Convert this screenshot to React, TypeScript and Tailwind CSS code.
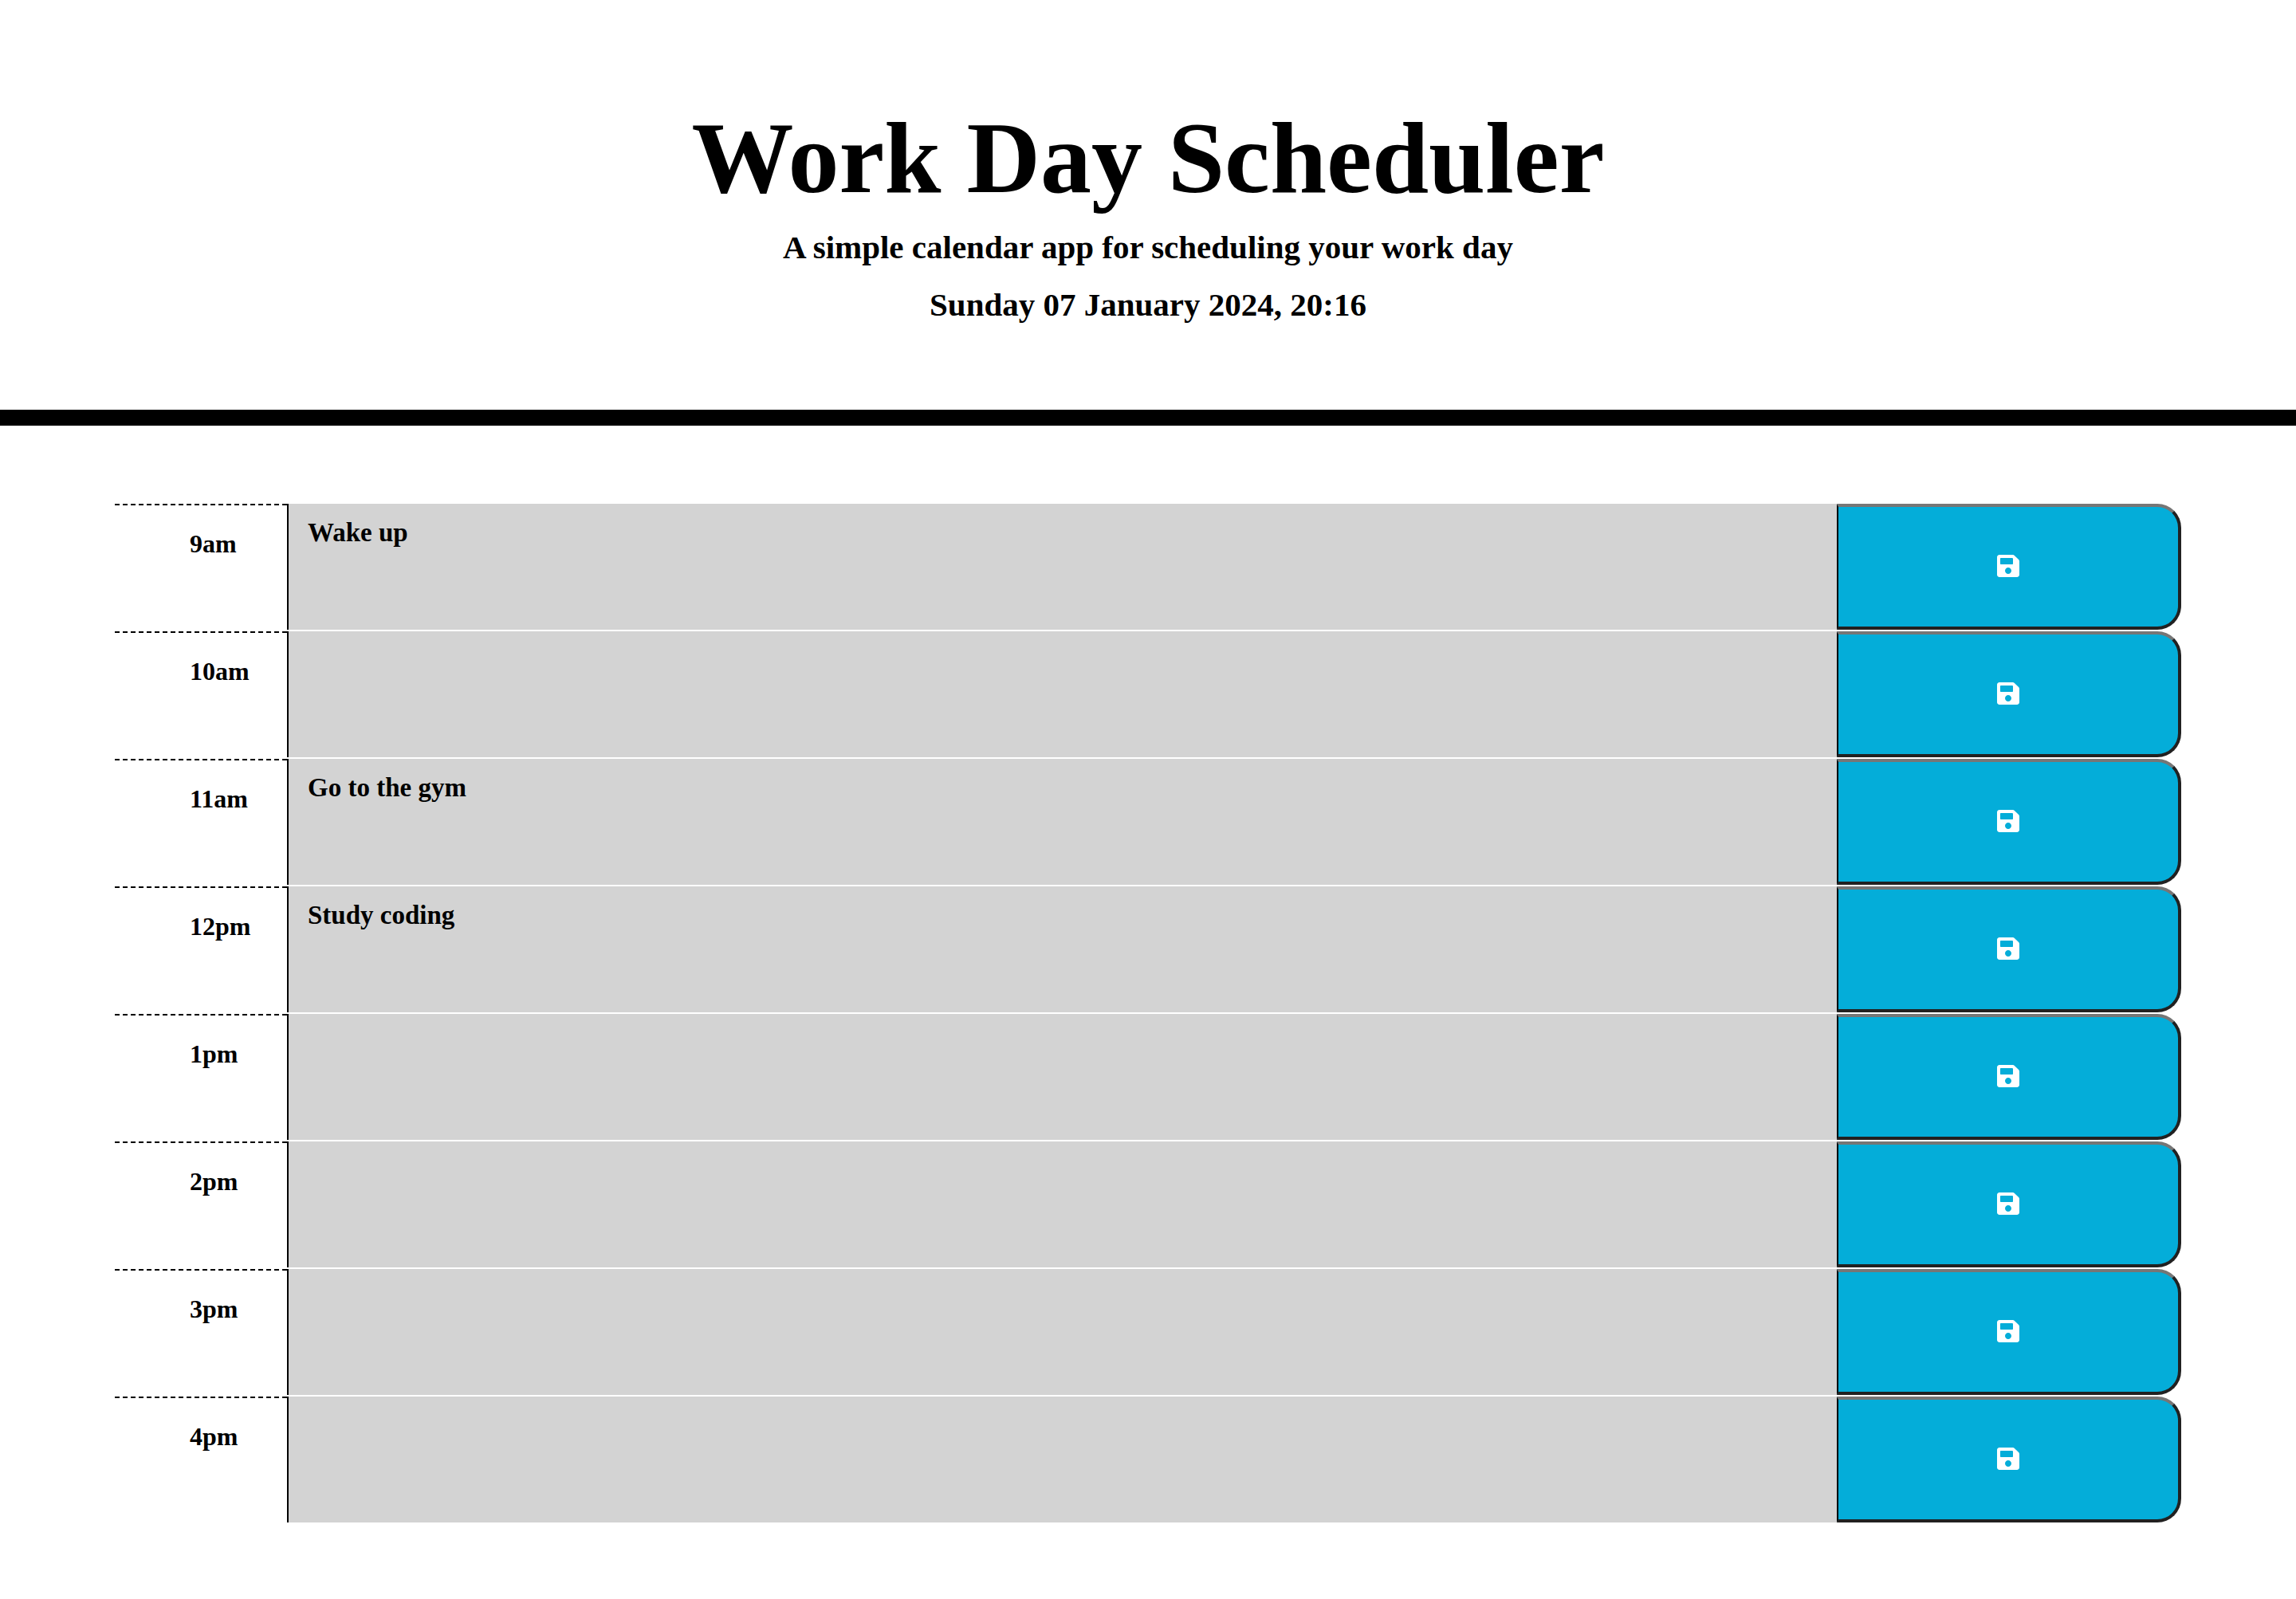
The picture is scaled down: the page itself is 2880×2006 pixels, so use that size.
import { FaSave } from "react-icons/fa";

type Slot = { hour: string; task: string };

const slots: Slot[] = [
  { hour: "9am", task: "Wake up" },
  { hour: "10am", task: "" },
  { hour: "11am", task: "Go to the gym" },
  { hour: "12pm", task: "Study coding" },
  { hour: "1pm", task: "" },
  { hour: "2pm", task: "" },
  { hour: "3pm", task: "" },
  { hour: "4pm", task: "" },
];

function TimeBlock({ hour, task }: Slot) {
  const id = `task-${hour}`;
  return (
    <div className="grid grid-cols-12">
      <label
        htmlFor={id}
        className="mb-0.5 border-t-2 border-dashed border-black pt-[30px] pl-[94px] text-[32px] leading-9"
      >
        {hour}
      </label>
      <div className="col-span-9 flex border-b-2 border-white">
        <textarea
          id={id}
          defaultValue={task}
          className="h-[158px] w-full resize-none border-l-2 border-black bg-[#d3d3d3] px-6 py-[18px] text-[33px] leading-9 outline-none"
        />
      </div>
      <button
        type="button"
        aria-label={`Save ${hour}`}
        className="col-span-2 mb-0.5 flex items-center justify-center rounded-r-[30px] border-4 border-l-2 border-t-[#767676] border-r-[#212121] border-b-[#212121] border-l-black bg-[#04add9] pb-0.5 text-white"
      >
        <FaSave className="h-8 w-7" />
      </button>
    </div>
  );
}

export default function App() {
  return (
    <div className="min-h-screen bg-white pb-20 font-['Liberation_Serif',serif] font-bold text-black">
      <header className="border-b-[20px] border-black pt-32 pb-[102px] text-center">
        <h1 className="text-[128px] leading-[140px]">Work Day Scheduler</h1>
        <p className="mt-3 text-[41px] leading-[60px]">
          A simple calendar app for scheduling your work day
        </p>
        <p className="mt-3 text-[41px] leading-[60px]">Sunday 07 January 2024, 20:16</p>
      </header>
      <main className="mx-auto mt-[98px] w-[90%]">
        {slots.map((slot) => (
          <TimeBlock key={slot.hour} {...slot} />
        ))}
      </main>
    </div>
  );
}
